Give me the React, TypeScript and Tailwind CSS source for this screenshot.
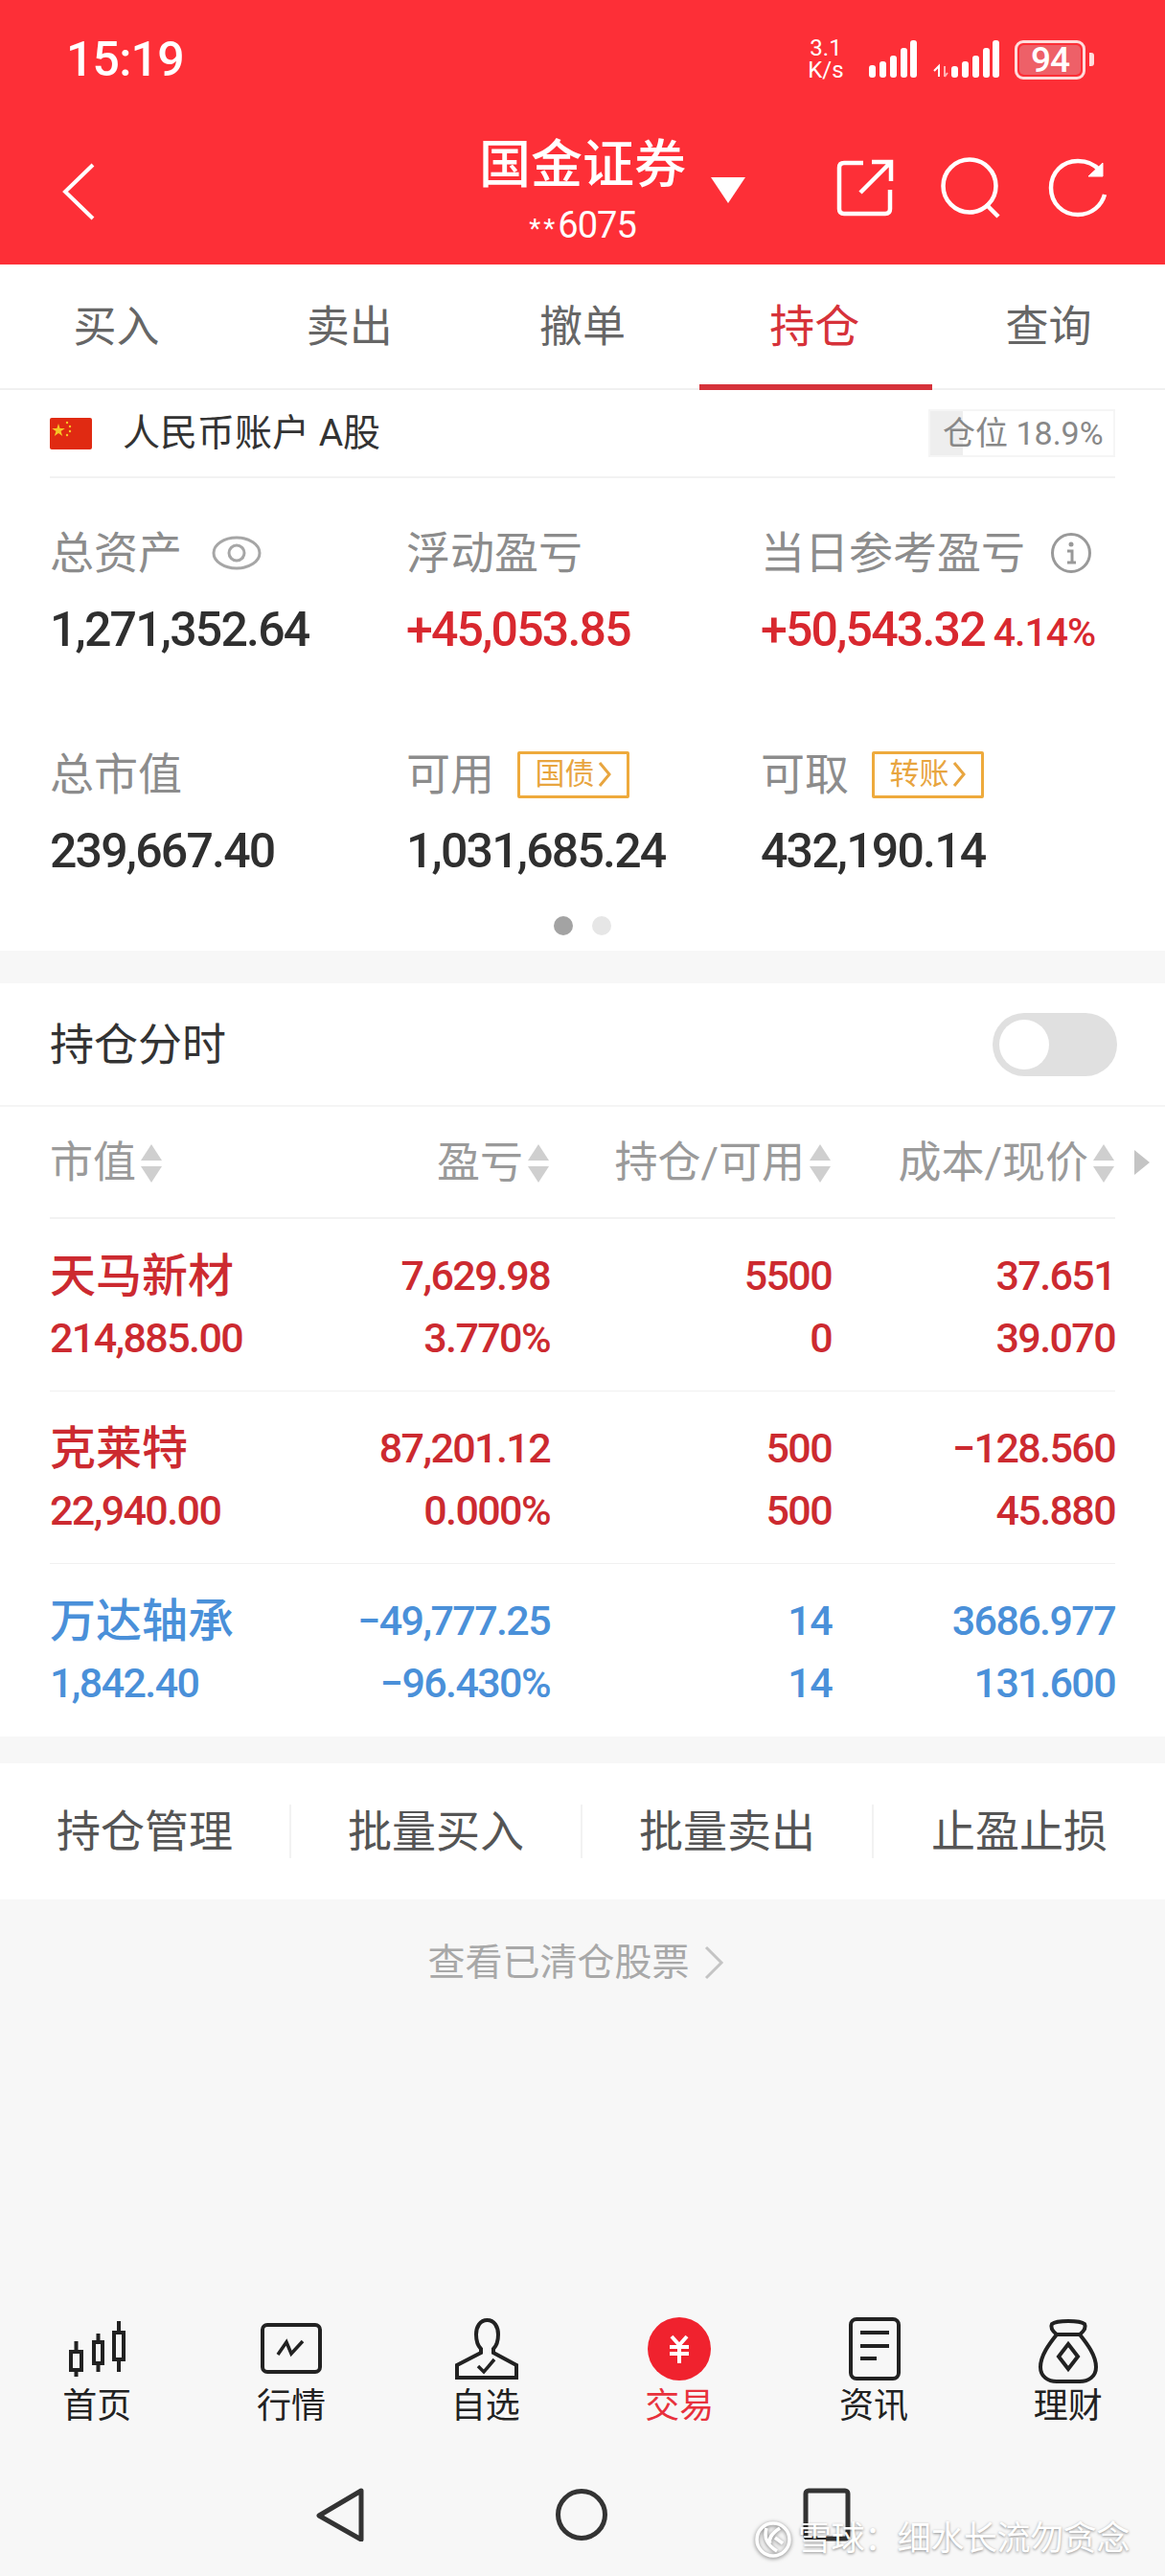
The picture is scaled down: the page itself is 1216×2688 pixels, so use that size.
import React from "react";

const F = "font-['Roboto','Noto_Sans_CJK_SC',sans-serif]";

function Stat({ label, value, extra, valueClass = "text-[#2f2f2f]", after }: { label: string; value: string; extra?: React.ReactNode; valueClass?: string; after?: React.ReactNode }) {
  return (
    <div>
      <div className="flex items-center h-[60px] pt-[2px]">
        <span className="text-[46px] leading-[60px] text-[#8c8c8c] whitespace-nowrap">{label}</span>
        {after}
      </div>
      <div className={`mt-[16px] h-[70px] flex items-baseline leading-[70px] text-[50px] tracking-[-1.8px] font-medium whitespace-nowrap ${valueClass}`}>
        {value}
        {extra}
      </div>
    </div>
  );
}

function Tag({ text }: { text: string }) {
  return (
    <span className="ml-[24px] flex items-center justify-center w-[117px] h-[49px] border-[3px] border-[#eeaa3c] rounded-[2px] text-[31px] text-[#e8a53f]">
      {text}
      <svg width="16" height="32" viewBox="0 0 16 32" className="ml-[2px]" fill="none" stroke="#e8a53f" strokeWidth="3"><path d="M3 4 L13 16 L3 28" /></svg>
    </span>
  );
}

function Sort() {
  return (
    <svg width="24" height="42" viewBox="0 0 24 42" className="ml-[4px] shrink-0" fill="#cfcfcf">
      <path d="M12 1 L23 18 H1 Z" />
      <path d="M12 41 L23 24 H1 Z" />
    </svg>
  );
}

function Row({ name, v, cls, last }: { name: string; v: string[]; cls: string; last?: boolean }) {
  return (
    <div className={`grid grid-cols-[260px_262px_294px_296px] content-start h-[180px] pt-[27px] text-[43px] tracking-[-1.6px] leading-[65px] font-medium whitespace-nowrap ${cls} ${last ? "" : "border-b border-[#f0f0f0]"}`}>
      <span className="text-[48px] tracking-normal">{name}</span>
      <span className="text-right">{v[0]}</span>
      <span className="text-right">{v[1]}</span>
      <span className="text-right">{v[2]}</span>
      <span>{v[3]}</span>
      <span className="text-right">{v[4]}</span>
      <span className="text-right">{v[5]}</span>
      <span className="text-right">{v[6]}</span>
    </div>
  );
}

function NavItem({ label, active, children }: { label: string; active?: boolean; children: React.ReactNode }) {
  return (
    <div className="flex flex-col items-center">
      <svg width="68" height="70" viewBox="0 0 68 70" fill="none" stroke="#222" strokeWidth="4">{children}</svg>
      <span className={`mt-[2px] text-[36px] leading-[42px] ${active ? "text-[#e8313c]" : "text-[#222]"}`}>{label}</span>
    </div>
  );
}

export default function App() {
  return (
    <div className={`${F} w-[1216px] h-[2688px] bg-[#f7f7f7] flex flex-col relative overflow-hidden`}>
      {/* Header */}
      <div className="bg-[#fd2f37] h-[276px] text-white shrink-0">
        <div className="h-[124px] flex items-center pl-[69px] pr-[74px]">
          <span className="text-[50px] tracking-[-0.8px] font-medium">15:19</span>
          <div className="ml-auto flex items-center">
            <div className="text-[24px] leading-[23px] text-center w-[40px]">3.1<br />K/s</div>
            <svg width="50" height="40" viewBox="0 0 50 40" fill="#fff" className="ml-[25px]">
              <rect x="0" y="26" width="7" height="13" rx="3" />
              <rect x="11" y="22" width="7" height="17" rx="3" />
              <rect x="22" y="16" width="7" height="23" rx="3" />
              <rect x="33" y="8" width="7" height="31" rx="3" />
              <rect x="43" y="0" width="7" height="39" rx="3" />
            </svg>
            <svg width="70" height="40" viewBox="0 0 70 40" fill="#fff" className="ml-[16px]">
              <path d="M2 32 L7 27 V38" stroke="#fff" strokeWidth="2" fill="none" />
              <path d="M13 27 V38 M13 38 L16 34" stroke="#ffb4b4" strokeWidth="2" fill="none" />
              <rect x="20" y="27" width="7" height="12" rx="3" />
              <rect x="31" y="22" width="7" height="17" rx="3" />
              <rect x="42" y="16" width="7" height="23" rx="3" />
              <rect x="53" y="8" width="7" height="31" rx="3" />
              <rect x="63" y="0" width="7" height="39" rx="3" />
            </svg>
            <div className="ml-[16px] w-[74px] h-[41px] border-[3px] border-[#ffdcdc] rounded-[9px] p-[2px]">
              <div className="w-full h-full bg-[#ee6068] rounded-[5px] flex items-center justify-center text-[37px] tracking-[-1px] font-medium leading-none">94</div>
            </div>
            <div className="ml-[4px] w-[5px] h-[14px] bg-[#ffdcdc] rounded-r-[3px]" />
          </div>
        </div>
        <div className="grid grid-cols-[1fr_auto_1fr] h-[152px]">
          <div className="pl-[63px] pt-[45px]">
            <svg width="38" height="62" viewBox="0 0 38 62" fill="none" stroke="#fff" strokeWidth="4"><path d="M34 3 L5 31 L34 59" /></svg>
          </div>
          <div className="flex flex-col items-center w-[218px]">
            <span className="text-[54px] leading-[70px] mt-[14px] font-medium whitespace-nowrap">国金证券</span>
            <span className="text-[38px] leading-[42px] mt-[6px] tracking-[-1px] whitespace-nowrap"><span className="text-[28px] tracking-[3px]">**</span>6075</span>
          </div>
          <div className="flex items-start pt-[42px] pr-[60px]">
            <svg width="36" height="27" viewBox="0 0 36 27" fill="#fff" className="ml-[25px] mt-[19px]"><path d="M0 0 H36 L18 27 Z" /></svg>
            <svg width="60" height="60" viewBox="0 0 60 60" fill="none" stroke="#fff" strokeWidth="4.5" className="ml-auto">
              <path d="M28 4 H8 Q3 4 3 9 V52 Q3 57 8 57 H51 Q56 57 56 52 V32" />
              <path d="M25 35 L56 4 M37 3 H57 V23" />
            </svg>
            <svg width="64" height="64" viewBox="0 0 64 64" fill="none" stroke="#fff" strokeWidth="4.5" className="ml-[49px] -mt-[2px]">
              <circle cx="30" cy="30" r="27.5" />
              <path d="M47 49 L60 62" />
            </svg>
            <svg width="62" height="62" viewBox="0 0 62 62" fill="none" stroke="#fff" strokeWidth="4.5" className="ml-[48px] -mt-[1px]">
              <path d="M54 13 C49 7 41 3 31 3 C15 3 3 15 3 31 C3 47 15 59 31 59 C46 59 56 49 59 38" />
              <path d="M57 5 V19 H42 Z" fill="#fff" strokeWidth="1" />
            </svg>
          </div>
        </div>
      </div>

      {/* Tabs */}
      <div className="bg-white grid grid-cols-5 h-[131px] border-b-2 border-[#f0f0f0] shrink-0 text-[45px] text-[#666]">
        {["买入", "卖出", "撤单", "持仓", "查询"].map((t, i) => (
          <div key={t} className={`flex items-center justify-center -mb-[2px] ${i === 3 ? "border-b-[6px] border-[#d6323a] text-[#d6323a] pt-[6px] text-[47px] pr-[2px]" : ""}`}>{t}</div>
        ))}
      </div>

      {/* Account + stats */}
      <div className="bg-white h-[585px] px-[52px] shrink-0">
        <div className="h-[92px] border-b-2 border-[#f2f2f2] flex items-center">
          <svg width="44" height="33" viewBox="0 0 44 33" className="rounded-[2px]">
            <rect width="44" height="33" fill="#e02a12" />
            <polygon points="9,6 10.6,11 15.8,11 11.6,14 13.2,19 9,16 4.8,19 6.4,14 2.2,11 7.4,11" fill="#f6c626" />
            <circle cx="18" cy="5" r="1.2" fill="#f6c626" />
            <circle cx="21" cy="9" r="1.2" fill="#f6c626" />
            <circle cx="21" cy="14" r="1.2" fill="#f6c626" />
            <circle cx="18" cy="18" r="1.2" fill="#f6c626" />
          </svg>
          <span className="ml-[32px] text-[39px] text-[#333] whitespace-nowrap">人民币账户 A股</span>
          <div className="ml-auto relative w-[195px] h-[50px] border-2 border-[#f5f5f5] text-[34px] text-[#888] leading-[46px] pl-[13px] whitespace-nowrap">
            <div className="absolute left-0 top-0 bottom-0 w-[34px] bg-[#eeeeee]" />
            <span className="relative">仓位 18.9%</span>
          </div>
        </div>
        <div className="grid grid-cols-[372px_370px_1fr] pt-[47px] h-[231px]" style={{ boxSizing: "content-box" }}>
          <Stat label="总资产" value="1,271,352.64" after={
            <svg width="52" height="38" viewBox="0 0 52 38" fill="none" stroke="#a6a6a6" strokeWidth="3" className="ml-[31px]">
              <ellipse cx="26" cy="19" rx="24" ry="16" />
              <circle cx="26" cy="19" r="8" />
            </svg>
          } />
          <Stat label="浮动盈亏" value="+45,053.85" valueClass="text-[#d8282f]" />
          <Stat label="当日参考盈亏" value="+50,543.32" valueClass="text-[#d8282f]" extra={<span className="ml-[9px] text-[41px] tracking-[-1px]">4.14%</span>} after={
            <svg width="44" height="44" viewBox="0 0 44 44" fill="none" stroke="#999" strokeWidth="3" className="ml-[26px]">
              <circle cx="22" cy="22" r="19.5" />
              <circle cx="22" cy="13" r="2.5" fill="#999" stroke="none" />
              <path d="M18 20 H23 V32 M18 32 H27" />
            </svg>
          } />
        </div>
        <div className="grid grid-cols-[372px_370px_1fr]">
          <Stat label="总市值" value="239,667.40" />
          <Stat label="可用" value="1,031,685.24" after={<Tag text="国债" />} />
          <Stat label="可取" value="432,190.14" after={<Tag text="转账" />} />
        </div>
        <div className="flex justify-center gap-[20px] mt-[33px]">
          <div className="w-[20px] h-[20px] rounded-full bg-[#a3a3a3]" />
          <div className="w-[20px] h-[20px] rounded-full bg-[#e6e6e6]" />
        </div>
      </div>

      <div className="h-[34px] shrink-0" />

      {/* Holdings */}
      <div className="bg-white shrink-0">
        <div className="h-[129px] px-[52px] flex items-center border-b-2 border-[#f5f5f5]">
          <span className="text-[46px] text-[#333] pt-[2px]">持仓分时</span>
          <div className="ml-auto w-[130px] h-[66px] -mr-[2px] rounded-full bg-[#e0e0e0] p-[7px]">
            <div className="w-[52px] h-[52px] bg-white rounded-full" />
          </div>
        </div>
        <div className="px-[52px] relative">
          <div className="grid grid-cols-[260px_262px_294px_296px] h-[117px] pt-[2px] items-center border-b-2 border-[#f2f2f2] text-[45px] text-[#9a9a9a] whitespace-nowrap">
            <div className="flex items-center"><span>市值</span><Sort /></div>
            <div className="flex items-center justify-end"><span>盈亏</span><Sort /></div>
            <div className="flex items-center justify-end"><span>持仓/可用</span><Sort /></div>
            <div className="flex items-center justify-end"><span>成本/现价</span><Sort /></div>
          </div>
          <svg width="18" height="26" viewBox="0 0 18 26" fill="#c4c4c4" className="absolute left-[1183px] top-[45px]"><path d="M1 0 L17 13 L1 26 Z" /></svg>
          <Row name="天马新材" cls="text-[#cc2a30]" v={["7,629.98", "5500", "37.651", "214,885.00", "3.770%", "0", "39.070"]} />
          <Row name="克莱特" cls="text-[#cc2a30]" v={["87,201.12", "500", "−128.560", "22,940.00", "0.000%", "500", "45.880"]} />
          <Row name="万达轴承" cls="text-[#4a90d9]" last v={["−49,777.25", "14", "3686.977", "1,842.40", "−96.430%", "14", "131.600"]} />
        </div>
      </div>

      <div className="h-[28px] shrink-0" />

      {/* Batch buttons */}
      <div className="bg-white grid grid-cols-4 h-[142px] items-center shrink-0 text-[46px] text-[#555]">
        {["持仓管理", "批量买入", "批量卖出", "止盈止损"].map((t, i) => (
          <div key={t} className={`h-[56px] flex items-center justify-center whitespace-nowrap ${i < 3 ? "border-r-2 border-[#f2f2f2]" : ""}`}>{t}</div>
        ))}
      </div>

      <div className="flex items-center justify-center h-[132px] pr-[14px] text-[39px] text-[#a8a8a8] shrink-0">
        查看已清仓股票
        <svg width="22" height="38" viewBox="0 0 22 38" fill="none" stroke="#c4c4c4" strokeWidth="3" className="ml-[14px]"><path d="M3 3 L19 19 L3 35" /></svg>
      </div>

      {/* Bottom nav */}
      <div className="mt-auto grid grid-cols-6 shrink-0">
        <NavItem label="首页">
          <rect x="7" y="36" width="11" height="19" />
          <path d="M12.5 25 V36 M12.5 55 V62" />
          <rect x="31" y="26" width="9" height="22" />
          <path d="M35.5 17 V26 M35.5 48 V57" />
          <rect x="52" y="16" width="10" height="28" />
          <path d="M57 4 V16 M57 44 V57" />
        </NavItem>
        <NavItem label="行情">
          <rect x="4" y="8" width="60" height="49" rx="5" />
          <path d="M20 39 L29 26 L34 38 L46 25" strokeWidth="3.5" />
        </NavItem>
        <NavItem label="自选">
          <path d="M35.5 3 C28 3 24 10 24 18 C24 25 26 30 29 33 V37 L4 50 V63 H66 V50 L42 37 V33 C45 30 47 25 47 18 C47 10 43 3 35.5 3 Z" />
          <path d="M26 51 L32 57 L43 44" strokeWidth="3.5" />
        </NavItem>
        <NavItem label="交易" active>
          <circle cx="34" cy="33" r="33" fill="#f0222e" stroke="none" />
          <path d="M26 20 L34 29 L42 20 M24 31 H44 M24 38 H44 M34 29 V48" stroke="#fff" strokeWidth="4" />
        </NavItem>
        <NavItem label="资讯">
          <rect x="10" y="2" width="50" height="62" rx="6" />
          <path d="M20 16 H50 M20 30 H50 M20 43 H37" />
        </NavItem>
        <NavItem label="理财">
          <path d="M22 18 C17 14 15 11 17 7 C22 3 46 3 51 7 C53 11 51 14 46 18 Z" />
          <path d="M22 18 C14 28 5 40 5 52 C5 62 13 67 22 67 H46 C55 67 63 62 63 52 C63 40 54 28 46 18" />
          <path d="M34 28 L44 41 L34 54 L24 41 Z" />
        </NavItem>
      </div>

      {/* System nav */}
      <div className="flex items-start pl-[330px] gap-[200px] mt-[64px] mb-[36px] shrink-0">
        <svg width="50" height="56" viewBox="0 0 50 56" fill="none" stroke="#333" strokeWidth="5" strokeLinejoin="round"><path d="M47 3 L3 29 L47 54 Z" /></svg>
        <svg width="54" height="56" viewBox="0 0 54 56" fill="none" stroke="#333" strokeWidth="5"><circle cx="27" cy="28" r="24.5" /></svg>
        <svg width="50" height="56" viewBox="0 0 50 56" fill="none" stroke="#333" strokeWidth="5" className="ml-[4px]"><rect x="3" y="3" width="44" height="50" rx="3" /></svg>
      </div>

      {/* Watermark */}
      <div className="absolute left-[787px] top-[2628px] flex items-center text-[35px] tracking-[-0.4px] leading-[44px] text-white whitespace-nowrap [text-shadow:0_1px_3px_rgba(0,0,0,0.45)]">
        <svg width="40" height="40" viewBox="0 0 40 40" fill="none" stroke="#fff" strokeWidth="3.5" className="drop-shadow-[0_1px_2px_rgba(0,0,0,0.5)]">
          <circle cx="20" cy="20" r="17" />
          <path d="M13 8 C10 18 14 26 24 32 M27 8 C18 14 15 20 17 24 M30 24 L22 18" />
        </svg>
        <span className="ml-[6px]">雪球：细水长流勿贪念</span>
      </div>
    </div>
  );
}
